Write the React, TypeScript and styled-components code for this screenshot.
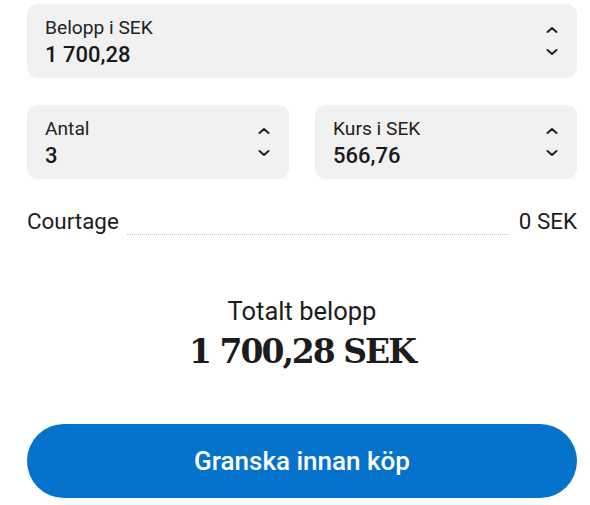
import styled, { createGlobalStyle } from "styled-components";

const Global = createGlobalStyle`
  body {
    margin: 0;
    background: #ffffff;
    font-family: Roboto, "Liberation Sans", Arial, sans-serif;
    color: #1c1c1c;
  }
`;

const Form = styled.div`
  width: 550px;
  padding: 4px 0 0 27px;
  display: flex;
  flex-direction: column;
`;

const Row = styled.div`
  display: flex;
  gap: 26px;
  margin-bottom: 27px;
`;

const Field = styled.div`
  flex: 1;
  height: 74px;
  box-sizing: border-box;
  background: #f1f1f1;
  border-radius: 11px;
  padding: 3px 19px 0 18px;
  display: flex;
  align-items: center;
  justify-content: space-between;
`;

const FieldText = styled.div`
  display: flex;
  flex-direction: column;
  gap: 2px;
`;

const Label = styled.span`
  font-size: 19.2px;
  line-height: 22px;
  color: #222;
`;

const Value = styled.span`
  font-size: 22px;
  font-weight: 500;
  line-height: 28px;
  color: #1a1a1a;
`;

const Stepper = styled.div`
  display: flex;
  flex-direction: column;
  gap: 14px;
  margin-top: -3px;
  color: #222;
`;

const Courtage = styled.div`
  display: flex;
  gap: 8px;
  font-size: 22.4px;
  line-height: 28px;
  margin-top: 1px;
`;

const Dots = styled.div`
  flex: 1;
  border-bottom: 1px dotted #c8c8c8;
  margin-right: 2px;
`;

const Total = styled.div`
  margin-top: 60px;
  display: flex;
  flex-direction: column;
  align-items: center;
`;

const TotalLabel = styled.span`
  font-size: 25.5px;
  line-height: 32px;
`;

const TotalValue = styled.span`
  font-family: "DejaVu Serif", "Liberation Serif", serif;
  font-weight: bold;
  font-size: 33px;
  line-height: 48px;
  letter-spacing: -2px;
  margin-top: 1px;
`;

const Button = styled.button`
  margin-top: 48px;
  height: 74px;
  border: none;
  border-radius: 37px;
  background: #0573cc;
  color: #ffffff;
  font-family: Roboto, "Liberation Sans", Arial, sans-serif;
  font-size: 26px;
  font-weight: 500;
  cursor: pointer;
`;

function Chevron({ up }: { up?: boolean }) {
  return (
    <svg width="12" height="8" viewBox="0 0 12 8">
      <path
        d={up ? "M1.5 6 L6 2 L10.5 6" : "M1.5 2 L6 6 L10.5 2"}
        fill="none"
        stroke="currentColor"
        strokeWidth="2"
        strokeLinecap="round"
        strokeLinejoin="round"
      />
    </svg>
  );
}

function NumberField({ label, value }: { label: string; value: string }) {
  return (
    <Field>
      <FieldText>
        <Label>{label}</Label>
        <Value>{value}</Value>
      </FieldText>
      <Stepper>
        <Chevron up />
        <Chevron />
      </Stepper>
    </Field>
  );
}

export default function App() {
  return (
    <>
      <Global />
      <Form>
        <Row>
          <NumberField label="Belopp i SEK" value="1 700,28" />
        </Row>
        <Row>
          <NumberField label="Antal" value="3" />
          <NumberField label="Kurs i SEK" value="566,76" />
        </Row>
        <Courtage>
          <span>Courtage</span>
          <Dots />
          <span>0 SEK</span>
        </Courtage>
        <Total>
          <TotalLabel>Totalt belopp</TotalLabel>
          <TotalValue>1 700,28 SEK</TotalValue>
        </Total>
        <Button>Granska innan köp</Button>
      </Form>
    </>
  );
}
